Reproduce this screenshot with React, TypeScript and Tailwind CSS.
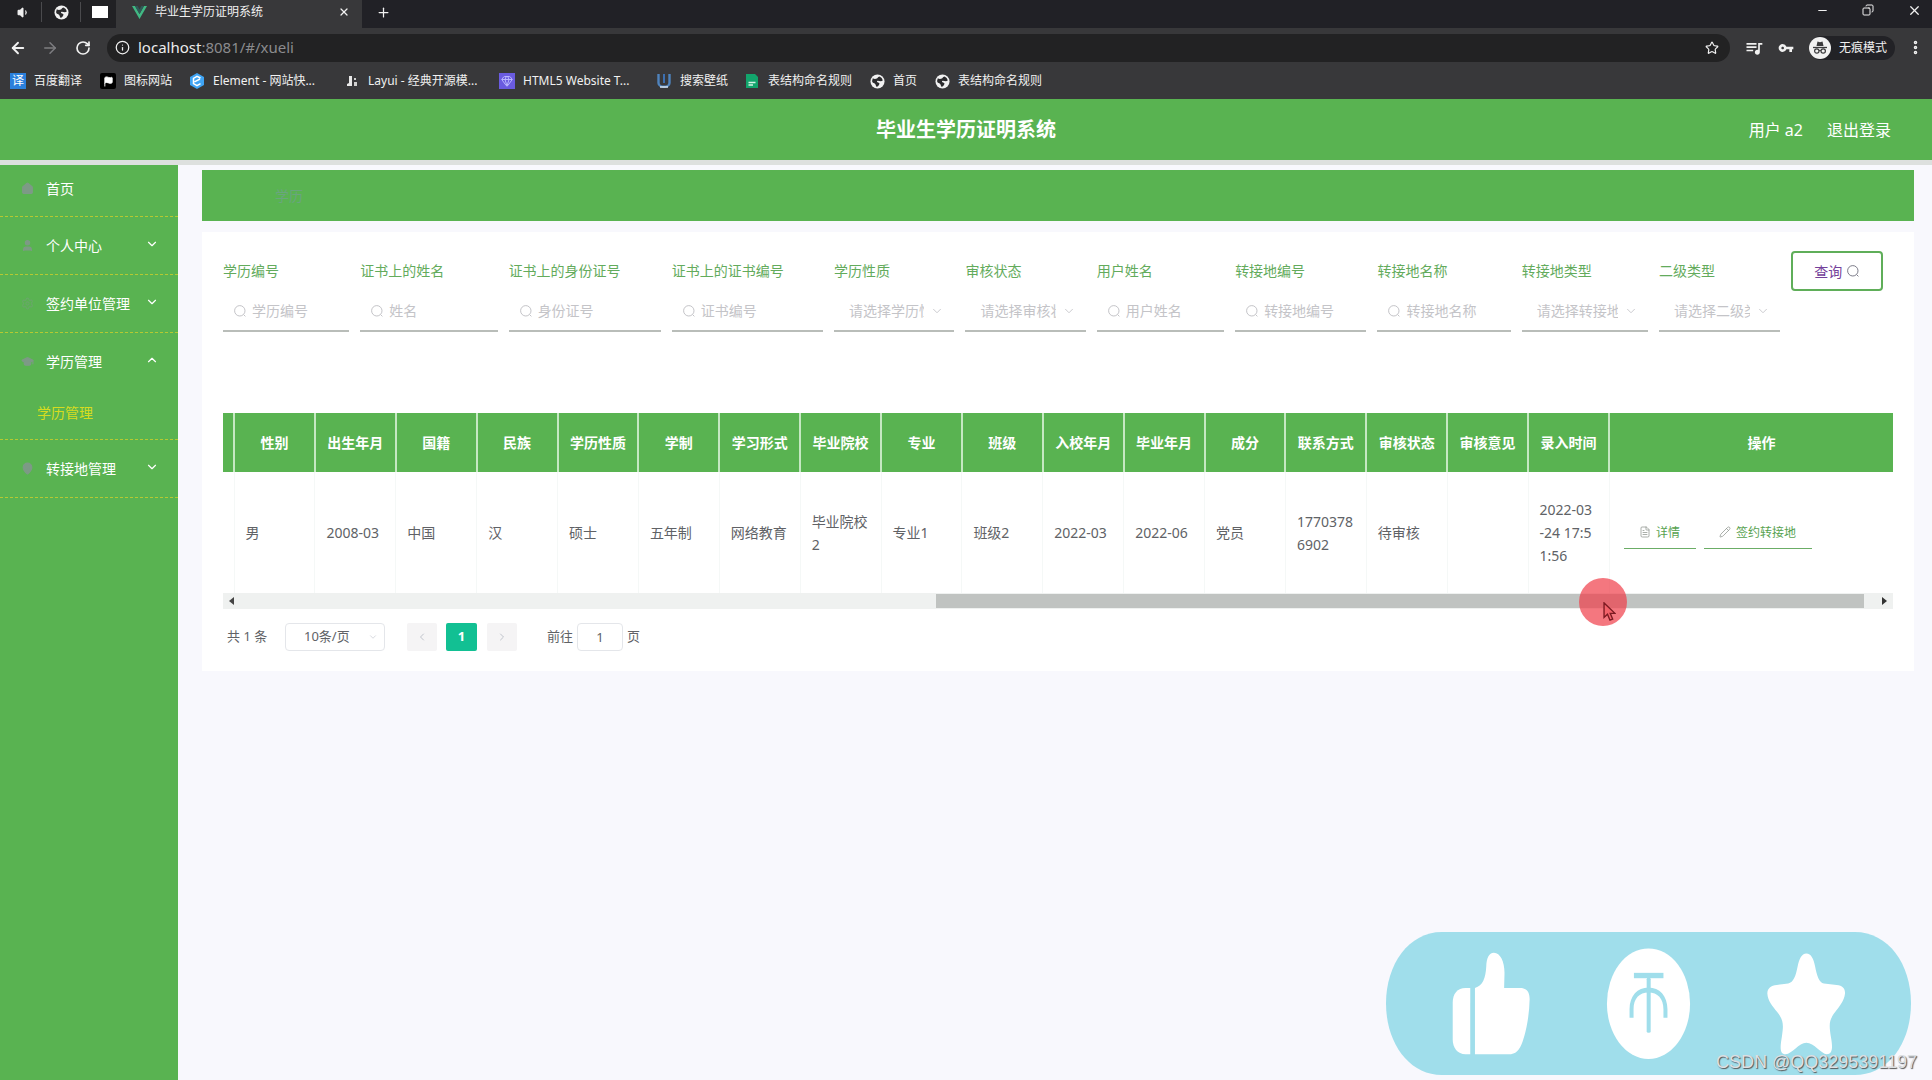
import React from "react";
import {
  ArrowLeft, ArrowRight, RotateCw, Info, Star, X, Plus, Minus, Copy,
  EllipsisVertical, Volume1, ChevronDown, ChevronUp, ChevronLeft, ChevronRight,
  House, User, Settings, GraduationCap, MapPin, Flag, Gem, FileText, Pencil,
} from "lucide-react";
import { MdQueueMusic, MdVpnKey } from "react-icons/md";

function Globe() {
  return (
    <svg viewBox="0 0 16 16" className="size-[15px] shrink-0" aria-hidden="true">
      <circle cx="8" cy="8" r="7.5" fill="#f1f1f1" />
      <path d="M3 4.5C5 6 8 5 8.5 3.5L10 2.6C12 3.3 13.2 5 13.6 7C12 8.6 10 7.5 8.4 7.2C6.6 7.4 7.4 9.4 9.4 9.2C10.6 9.6 10 11 9 12.4L7.6 13.6C6 13.6 6.6 11 5 10C3.6 9.6 2.4 9 2.2 7.4Z" fill="#2b2b2d" />
    </svg>
  );
}

function Glass({ className }: { className: string }) {
  return (
    <svg viewBox="0 0 14 14" className={className} fill="none" stroke="currentColor" aria-hidden="true">
      <circle cx="6.8" cy="6.8" r="5.2" />
      <path d="M10.6 10.6L12.4 12.4" />
    </svg>
  );
}

const bookmarks: { label: string; width: string; icon: React.ReactNode }[] = [
  { label: "百度翻译", width: "w-[90px]", icon: <span className="flex size-4 items-center justify-center bg-[#2b80dc] text-[12px] text-white">译</span> },
  { label: "图标网站", width: "w-[89px]", icon: <span className="flex size-4 items-center justify-center rounded-xs bg-black"><Flag size={11} fill="white" color="white" /></span> },
  { label: "Element - 网站快...", width: "w-[155px]", icon: (
    <svg viewBox="0 0 16 16" className="size-4 shrink-0"><path d="M8 0L15 4V12L8 16L1 12V4Z" fill="#3fa4f4" /><path d="M11.5 5L8 3.4L4.5 5.4V10.6L8 12.6L11.5 10.6M5.5 8.8L11 6" stroke="#fff" strokeWidth="1.5" fill="none" /></svg>
  ) },
  { label: "Layui - 经典开源模...", width: "w-[155px]", icon: (
    <svg viewBox="0 0 16 16" className="size-4 shrink-0"><path d="M5 3H8V13H3V11L5 10Z" fill="#e8e8e8" /><path d="M10 5H12V7H10ZM10 9H13V13H10Z" fill="#cfcfcf" /></svg>
  ) },
  { label: "HTML5 Website T...", width: "w-[157px]", icon: <span className="flex size-4 items-center justify-center bg-[#6a5be0] text-[#b9b6ff]"><Gem size={12} /></span> },
  { label: "搜索壁纸", width: "w-[88px]", icon: (
    <svg viewBox="0 0 16 16" className="size-4 shrink-0"><path d="M2.5 1V10C2.5 15 13.5 15 13.5 10V1" stroke="#4f83bd" strokeWidth="2.4" fill="none" /><path d="M8 1V10" stroke="#3c6fb0" strokeWidth="2" /><path d="M4 14H12" stroke="#d9e4f2" strokeWidth="1.5" /></svg>
  ) },
  { label: "表结构命名规则", width: "w-[126px]", icon: (
    <svg viewBox="0 0 16 16" className="size-4 shrink-0"><path d="M2 1H11L14 4V15H2Z" fill="#12a56c" /><path d="M4.500 9.500H11.500M4.500 12H9" stroke="#d5f3e5" strokeWidth="1.3" /></svg>
  ) },
  { label: "首页", width: "w-[65px]", icon: <Globe /> },
  { label: "表结构命名规则", width: "w-[120px]", icon: <Globe /> },
];

function BrowserChrome() {
  return (
    <div className="h-[99px] bg-[#38383a] text-[12px] text-[#f1f1f1]">
      <div className="flex h-7 items-center bg-[#212126]">
        <div className="flex h-full w-[116px] shrink-0 items-center justify-between rounded-br-md bg-[#212124] pr-2 pb-1 pl-[17px]">
          <Volume1 size={13} fill="currentColor" />
          <span className="h-5 w-px bg-[#4a4a4d]" />
          <Globe />
          <span className="h-5 w-px bg-[#4a4a4d]" />
          <span className="h-3 w-4 bg-white" />
        </div>
        <div className="flex h-full w-[246px] shrink-0 items-center bg-[#38383a] px-4 pb-1">
          <svg viewBox="0 0 15 13" className="mr-2 h-[13px] w-[15px] shrink-0" aria-hidden="true">
            <path d="M0 0H3L7.500 8L12 0H15L7.500 13Z" fill="#41b883" />
            <path d="M3 0H5.600L7.500 3.400L9.400 0H12L7.500 8Z" fill="#2f5a58" />
          </svg>
          <span className="flex-1 whitespace-nowrap">毕业生学历证明系统</span>
          <button aria-label="关闭标签页" className="-mr-1"><X size={12} strokeWidth={2.5} /></button>
        </div>
        <button aria-label="新标签页" className="mb-1 ml-[14px]"><Plus size={15} /></button>
        <div className="mb-2 ml-auto flex items-center gap-[33px] pr-[10px]">
          <button aria-label="最小化"><Minus size={13} /></button>
          <button aria-label="还原"><Copy size={12} className="-scale-x-100" /></button>
          <button aria-label="关闭"><X size={15} /></button>
        </div>
      </div>
      <div className="flex h-[39px] items-center pl-[9px]">
        <button aria-label="后退"><ArrowLeft size={18} strokeWidth={2.5} /></button>
        <button aria-label="前进" className="ml-[14px] text-[#7d7d80]"><ArrowRight size={18} /></button>
        <button aria-label="刷新" className="ml-4"><RotateCw size={16} strokeWidth={2.5} /></button>
        <div className="ml-4 flex h-7 flex-1 items-center rounded-full bg-[#222223] px-2">
          <Info size={15} className="shrink-0" />
          <span className="ml-2 flex-1 text-[15px] text-[#8b8b8e]"><span className="text-[#ececec]">localhost</span>:8081/#/xueli</span>
          <Star size={14} className="mr-[3px]" />
        </div>
        <MdQueueMusic size={20} className="ml-[14px]" />
        <MdVpnKey size={16} className="ml-[14px]" />
        <div className="ml-[15px] flex h-6 w-[86px] items-center gap-2 rounded-full bg-[#222226]">
          <svg viewBox="0 0 22 22" className="size-[22px] shrink-0" aria-hidden="true">
            <circle cx="11" cy="11" r="11" fill="#f1f1f1" />
            <path d="M7.500 9L8.500 4.500L11 5.300L13.500 4.500L14.500 9Z" fill="#3a3a3c" />
            <path d="M4 10.500H18" stroke="#3a3a3c" strokeWidth="1.300" />
            <circle cx="7.800" cy="14" r="2.200" fill="none" stroke="#3a3a3c" strokeWidth="1.200" />
            <circle cx="14.200" cy="14" r="2.200" fill="none" stroke="#3a3a3c" strokeWidth="1.200" />
            <path d="M10 13.600H12" stroke="#3a3a3c" />
          </svg>
          <span className="whitespace-nowrap">无痕模式</span>
        </div>
        <button aria-label="菜单" className="mr-2 ml-3"><EllipsisVertical size={17} strokeWidth={3} /></button>
      </div>
      <nav className="flex h-7 items-center pl-[10px]">
        {bookmarks.map((b, i) => (
          <a key={i} href="#" className={`flex shrink-0 items-center gap-2 whitespace-nowrap ${b.width}`}>
            {b.icon}
            {b.label}
          </a>
        ))}
      </nav>
    </div>
  );
}

const menu = [
  { label: "首页", Icon: House, arrow: "" },
  { label: "个人中心", Icon: User, arrow: "down" },
  { label: "签约单位管理", Icon: Settings, arrow: "down", faint: true },
  { label: "学历管理", Icon: GraduationCap, arrow: "up", child: "学历管理" },
  { label: "转接地管理", Icon: MapPin, arrow: "down" },
];

function Sidebar() {
  return (
    <aside className="w-[178px] shrink-0 bg-[#59b351] text-[14px] text-white">
      {menu.map(({ label, Icon, arrow, child, faint }, i) => (
        <div key={label} className="border-b border-dashed border-[#b5c932]">
          <a href="#" className={`flex items-center pr-[19px] pl-[21px] ${i === 0 ? "h-[51px] pb-1" : "h-[57px]"}`}>
            <Icon size={13} className={faint ? "text-[#68a868]" : "text-[#7d9a86]"} fill={faint ? "none" : "currentColor"} />
            <span className="ml-3 flex-1">{label}</span>
            {arrow === "down" && <ChevronDown size={14} strokeWidth={2} className="mb-1" />}
            {arrow === "up" && <ChevronUp size={14} strokeWidth={2} className="mb-1" />}
          </a>
          {child && <a href="#" className="flex h-[49px] items-center pb-1 pl-[37px] text-[#d6dc1f]">{child}</a>}
        </div>
      ))}
    </aside>
  );
}

const fields = [
  { label: "学历编号", hint: "学历编号" },
  { label: "证书上的姓名", hint: "姓名" },
  { label: "证书上的身份证号", hint: "身份证号" },
  { label: "证书上的证书编号", hint: "证书编号" },
  { label: "学历性质", hint: "请选择学历性质", select: true },
  { label: "审核状态", hint: "请选择审核状态", select: true },
  { label: "用户姓名", hint: "用户姓名" },
  { label: "转接地编号", hint: "转接地编号" },
  { label: "转接地名称", hint: "转接地名称" },
  { label: "转接地类型", hint: "请选择转接地类型", select: true },
  { label: "二级类型", hint: "请选择二级类型", select: true },
];

function SearchForm() {
  return (
    <form className="grid grid-cols-[127fr_138fr_153fr_152fr_121fr_121fr_128fr_132fr_134fr_127fr_122fr_92fr] gap-x-[11px] pr-[10px]">
      {fields.map((f, i) => (
        <div key={f.label} className="min-w-0">
          <label htmlFor={`f${i}`} className="flex h-10 items-center pb-[2px] whitespace-nowrap text-[14px] text-[#63ab5c]">{f.label}</label>
          <div className="relative h-[41px] border-b-2 border-[#b9bdb9] text-[#c4c4c8]">
            {f.select ? (
              <>
                <select id={`f${i}`} className="size-full appearance-none bg-transparent pr-[30px] pl-[15px] text-[14px] outline-none">
                  <option>{f.hint}</option>
                </select>
                <ChevronDown size={14} strokeWidth={1.5} className="pointer-events-none absolute top-[13px] right-[10px]" />
              </>
            ) : (
              <>
                <Glass className="pointer-events-none absolute top-[13px] left-[10px] size-[14px]" />
                <input id={`f${i}`} placeholder={f.hint} className="size-full bg-transparent pl-[29px] text-[14px] outline-none placeholder:text-[#c4c4c8]" />
              </>
            )}
          </div>
        </div>
      ))}
      <button type="button" className="flex h-10 items-center justify-center gap-1 rounded border-2 border-[#5fae59] text-[14px] text-[#74409a]">
        查询
        <Glass className="size-[14px] text-[#7d7d8a]" />
      </button>
    </form>
  );
}

const columns: [string, string[]][] = [
  ["性别", ["男"]],
  ["出生年月", ["2008-03"]],
  ["国籍", ["中国"]],
  ["民族", ["汉"]],
  ["学历性质", ["硕士"]],
  ["学制", ["五年制"]],
  ["学习形式", ["网络教育"]],
  ["毕业院校", ["毕业院校", "2"]],
  ["专业", ["专业1"]],
  ["班级", ["班级2"]],
  ["入校年月", ["2022-03"]],
  ["毕业年月", ["2022-06"]],
  ["成分", ["党员"]],
  ["联系方式", ["1770378", "6902"]],
  ["审核状态", ["待审核"]],
  ["审核意见", []],
  ["录入时间", ["2022-03", "-24 17:5", "1:56"]],
];

function DataTable() {
  return (
    <div className="mt-[81px]">
      <table className="w-full table-fixed border-collapse text-[14px]">
        <colgroup>
          <col className="w-[11px]" />
          {columns.map(([h]) => <col key={h} />)}
          <col className="w-[17%]" />
        </colgroup>
        <thead>
          <tr className="h-[59px] bg-[#59b351] text-white">
            <th className="border-r-2 border-[#c5e8c2]" />
            {columns.map(([h]) => <th key={h} className="border-r-2 border-[#c5e8c2] font-bold whitespace-nowrap">{h}</th>)}
            <th className="pl-5 font-bold">操作</th>
          </tr>
        </thead>
        <tbody>
          <tr className="h-[121px] leading-[23px] text-[#606266]">
            <td className="border-r border-[#f5f8f7]" />
            {columns.map(([h, lines]) => (
              <td key={h} className="border-r border-[#f5f8f7] pl-[11px] whitespace-nowrap">
                {lines.map((l) => <div key={l}>{l}</div>)}
              </td>
            ))}
            <td className="pl-[14px]">
              <div className="flex gap-2 text-[12px] text-[#57a250]">
                <button className="flex h-8 w-[72px] items-center justify-center gap-[5px] border-b border-[#6bad66]">
                  <FileText size={12} strokeWidth={1.5} className="text-[#8d948d]" />详情
                </button>
                <button className="flex h-8 w-[108px] items-center justify-center gap-[5px] border-b border-[#6bad66]">
                  <Pencil size={12} strokeWidth={1.5} className="text-[#8d948d]" />签约转接地
                </button>
              </div>
            </td>
          </tr>
        </tbody>
      </table>
      <div className="relative flex h-4 items-center bg-[#eff1f0] px-[6px]">
        <span className="border-y-4 border-r-[5px] border-y-transparent border-r-[#444]" />
        <div className="flex-1 pr-[18px] pl-[702px]"><div className="h-[14px] bg-[#c0c3c1]" /></div>
        <span className="border-y-4 border-l-[5px] border-y-transparent border-l-[#333]" />
        <div className="absolute -top-[15px] right-[266px] size-12 rounded-full bg-[#ef3d49]/70">
          <svg viewBox="0 0 14 22" className="absolute top-6 left-6 h-5 w-[13px]" aria-hidden="true">
            <path d="M1 1V17L4.800 13.500L7.500 20L10.500 18.800L7.800 12.500H13Z" fill="#f2626a" stroke="#7c1a22" strokeWidth="1.500" />
          </svg>
        </div>
      </div>
    </div>
  );
}

function Pagination() {
  return (
    <div className="mt-[14px] flex h-7 items-center pl-1 text-[13px] text-[#606266]">
      <span className="w-[58px]">共 1 条</span>
      <div className="relative h-7 w-[100px] rounded border border-[#e4e6ea]">
        <select aria-label="每页条数" className="size-full appearance-none bg-transparent pl-[18px] outline-none">
          <option>10条/页</option>
        </select>
        <ChevronDown size={10} className="pointer-events-none absolute top-2 right-[6px] text-[#d0d3d8]" />
      </div>
      <button aria-label="上一页" className="ml-[22px] flex h-7 w-[30px] items-center justify-center rounded-xs bg-[#f5f4f5] text-[#c0c4cc]"><ChevronLeft size={12} /></button>
      <button className="ml-[9px] h-7 w-[31px] rounded-xs bg-[#12c093] font-bold text-white">1</button>
      <button aria-label="下一页" className="ml-[10px] flex h-7 w-[30px] items-center justify-center rounded-xs bg-[#f5f4f5] text-[#c0c4cc]"><ChevronRight size={12} /></button>
      <label htmlFor="page" className="ml-[30px]">前往</label>
      <input id="page" defaultValue="1" className="mx-1 h-7 w-[46px] rounded border border-[#e4e6ea] text-center outline-none" />
      <span>页</span>
    </div>
  );
}

function LikeBanner() {
  return (
    <div className="absolute right-[21px] bottom-[5px] h-[143px] w-[525px]">
      <svg viewBox="72 94 1440 427" preserveAspectRatio="none" className="size-full" aria-hidden="true">
        <path d="M225 94H1358C1450 94 1512 190 1512 307C1512 425 1450 521 1358 521H225C135 521 72 425 72 307C72 190 135 94 225 94Z" fill="#a0deeb" />
        <g fill="#fff">
          <path d="M303 261V459H290C268 459 255 440 255 415V305C255 278 268 261 290 261Z" />
          <path d="M316 261C338 254 345 232 347 197C348 172 354 156 368 156C386 156 398 185 397 220L396 261H440C458 261 466 274 466 295C465 340 458 385 447 420C438 448 428 459 408 459H316Z" />
          <ellipse cx="792" cy="308" rx="114" ry="165" />
          <path d="M1225 158C1238 158 1245 174 1249 197C1254 225 1260 245 1273 248L1308 252C1325 254 1332 263 1331 278C1329 300 1315 318 1304 333C1287 357 1287 370 1292 405C1298 440 1297 459 1281 459C1266 459 1246 425 1225 425C1204 425 1186 459 1168 459C1151 459 1153 437 1158 405C1163 370 1162 357 1145 333C1133 317 1119 300 1118 278C1118 261 1128 254 1144 252L1175 248C1190 244 1196 225 1201 197C1205 175 1212 158 1225 158Z" />
        </g>
        <g fill="#a0deeb">
          <rect x="752" y="216" width="81" height="16" />
          <rect x="787" y="230" width="11" height="165" rx="5" />
          <path d="M740 350V325C740 285 762 260 792 260C822 260 844 285 844 325V350H833V325C833 293 817 275 792 275C767 275 751 293 751 325V350Z" />
        </g>
      </svg>
    </div>
  );
}

export default function App() {
  return (
    <div className="relative flex min-h-screen flex-col overflow-hidden bg-[#f8f8fd] font-['Noto_Sans','Noto_Sans_CJK_SC',sans-serif]">
      <BrowserChrome />
      <header className="grid h-[61px] grid-cols-[1fr_auto_1fr] items-center bg-[#59b351] px-[41px] text-white">
        <span />
        <h1 className="text-[20px] font-bold">毕业生学历证明系统</h1>
        <div className="flex justify-end gap-6 text-[16px]">
          <span>用户 a2</span>
          <a href="#">退出登录</a>
        </div>
      </header>
      <div className="h-[5px] bg-[#dde0de]" />
      <div className="flex flex-1">
        <Sidebar />
        <main className="min-w-0 flex-1 pt-[5px] pr-[18px] pl-6">
          <div className="flex h-[51px] items-center bg-[#59b351] pl-[73px] text-[14px] text-[#6aa57e]">学历</div>
          <section className="mt-[11px] bg-white px-[21px] pt-[19px] pb-5">
            <SearchForm />
            <DataTable />
            <Pagination />
          </section>
        </main>
      </div>
      <LikeBanner />
      <div className="absolute right-[15px] bottom-1 font-['Liberation_Sans',sans-serif] text-[18px] text-[#dcdfe2] [text-shadow:1px_1px_1px_#555]">CSDN @QQ3295391197</div>
    </div>
  );
}
